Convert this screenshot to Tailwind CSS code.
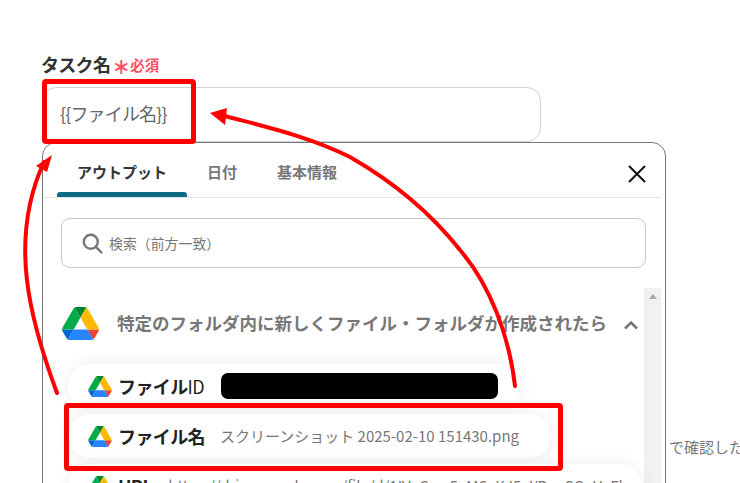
<!DOCTYPE html>
<html><head><meta charset="utf-8">
<script src="https://cdn.jsdelivr.net/npm/@tailwindcss/browser@4"></script>
</head>
<body class="bg-white">
<svg width="0" height="0" class="absolute"><defs>
<symbol id="gd" viewBox="0 0 87.3 78">
<path d="m6.6 66.85 3.85 6.65c.8 1.4 1.95 2.5 3.3 3.3l13.75-23.8h-27.5c0 1.55.4 3.1 1.2 4.5z" fill="#0066da"/>
<path d="m43.65 25-13.75-23.8c-1.35.8-2.5 1.9-3.3 3.3l-25.4 44a9.06 9.06 0 0 0 -1.2 4.5h27.5z" fill="#00ac47"/>
<path d="m73.55 76.8c1.35-.8 2.5-1.9 3.3-3.3l1.6-2.75 7.65-13.25c.8-1.4 1.2-2.95 1.2-4.5h-27.502l5.852 11.5z" fill="#ea4335"/>
<path d="m43.65 25 13.75-23.8c-1.35-.8-2.9-1.2-4.5-1.2h-18.5c-1.6 0-3.15.45-4.5 1.2z" fill="#00832d"/>
<path d="m59.8 53h-32.3l-13.75 23.8c1.35.8 2.9 1.2 4.5 1.2h50.8c1.6 0 3.15-.45 4.5-1.2z" fill="#2684fc"/>
<path d="m73.4 26.5-12.7-22c-.8-1.4-1.95-2.5-3.3-3.3l-13.75 23.8 16.15 28h27.45c0-1.55-.4-3.1-1.2-4.5z" fill="#ffba00"/>
</symbol></defs></svg>
<div class="relative w-[740px] h-[483px] overflow-hidden pl-[42px] pt-[52px] font-['Noto_Sans_CJK_JP','Liberation_Sans',sans-serif]">
  <div class="flex items-center h-[25px]">
    <span class="text-[18px] font-bold text-[#333] tracking-[-0.7px] -ml-[1px]">タスク名</span>
    <span class="text-[18px] font-black text-[#ff4d64] ml-[2px] mt-[3px] leading-none">＊</span>
    <span class="text-[14.500px] font-bold text-[#ff4d64]">必須</span>
  </div>
  <div class="mt-[10px] w-[499px] h-[55px] rounded-[14px] border border-[#d0d2d8] flex items-center pl-[17px] pb-[2px] text-[18px] text-[#666] tracking-[-0.85px]">{{ファイル名}}</div>
  <div class="w-[624px] h-[400px] rounded-tl-[14px] rounded-tr-[14px] border border-[#777] bg-white flex flex-col">
    <div class="relative h-[55px] border-b border-[#e4e4e4] flex items-start mr-[4px] shrink-0">
      <div class="relative w-[130px] ml-[14px] h-[54px] flex justify-center pt-[16px] text-[15px] font-bold text-[#333] leading-[26px]">アウトプット<span class="absolute left-0 right-0 bottom-0 h-[5px] rounded-t-[3px] bg-[#0e6b85]"></span></div>
      <div class="pt-[16px] ml-[20px] text-[15px] font-bold text-[#777] leading-[26px]">日付</div>
      <div class="pt-[16px] ml-[40px] text-[15px] font-bold text-[#777] leading-[26px]">基本情報</div>
      <svg class="absolute right-[15px] top-[22px]" width="18" height="18" viewBox="0 0 18 18"><path d="M1 1 17 17M17 1 1 17" stroke="#111" stroke-width="2" fill="none"/></svg>
    </div>
    <div class="ml-[18px] mt-[20px] w-[585px] h-[50px] rounded-[9px] border border-[#c8c8c8] flex items-center pl-[20px] shrink-0">
      <svg width="21" height="21" viewBox="0 0 21 21" fill="none" stroke="#777" stroke-width="2.4"><circle cx="8.8" cy="8.8" r="7"/><path d="m13.8 13.800 5.600 5.600" stroke-linecap="round"/></svg>
      <span class="ml-[6px] text-[13.800px] text-[#777] tracking-[0.1px]">検索（前方一致）</span>
    </div>
    <div class="flex mt-[20px] flex-1">
      <div class="w-[601px] relative">
        <div class="flex items-center pl-[19px] h-[36px] mt-[17px]">
          <svg width="37" height="33"><use href="#gd"/></svg>
          <span class="ml-[18px] text-[17.500px] font-bold text-[#777] whitespace-nowrap">特定のフォルダ内に新しくファイル・フォルダが作成されたら</span>
          <svg class="ml-[17px] mt-[4px] shrink-0" width="14" height="10" viewBox="0 0 14 10" fill="none" stroke="#777" stroke-width="2.6"><path d="m1 8.500 6-6 6 6"/></svg>
        </div>
        <div class="flex flex-col gap-[6px] mt-[23px] pl-[25px]">
          <div class="flex items-center w-[452px] h-[44px] rounded-full bg-white shadow-[0_0_16px_rgba(0,0,0,0.08)] pl-[20px]">
            <svg width="24" height="21"><use href="#gd"/></svg>
            <span class="ml-[6px] text-[18px] font-bold text-[#222] tracking-[-0.6px]">ファイル<span class="font-normal">ID</span></span>
            <span class="ml-[17px] w-[277px] h-[26px] rounded-[7px] bg-black"></span>
          </div>
          <div class="flex items-center w-[483px] h-[44px] rounded-full bg-white shadow-[0_0_16px_rgba(0,0,0,0.08)] pl-[20px]">
            <svg width="24" height="21"><use href="#gd"/></svg>
            <span class="ml-[6px] text-[18px] font-bold text-[#222] tracking-[-0.6px]">ファイル名</span>
            <span class="ml-[15px] text-[15px] text-[#777] whitespace-nowrap">スクリーンショット 2025-02-10 151430.png</span>
          </div>
          <div class="flex items-center w-[574px] h-[44px] rounded-[22px] bg-white shadow-[0_0_16px_rgba(0,0,0,0.08)] pl-[20px]">
            <svg width="24" height="21"><use href="#gd"/></svg>
            <span class="ml-[6px] text-[18px] font-bold text-[#222] tracking-[-0.6px]">URL</span>
            <span class="ml-[16px] text-[15px] text-[#777] whitespace-nowrap overflow-hidden">https://drive.google.com/file/d/1IV_Cuz-5_M6_KJ5_YD__SQ_V_Fl</span>
          </div>
        </div>
      </div>
      <div class="w-[17px] bg-[#f1f1f1] flex justify-center pt-[6px] h-[200px]">
        <span class="w-0 h-0 border-x-[4px] border-x-transparent border-b-[5px] border-b-[#a8a8a8]"></span>
      </div>
    </div>
  </div>
  <span class="absolute left-[669px] top-[436px] text-[15px] text-[#777] whitespace-nowrap">で確認した</span>
  <svg class="absolute inset-0 pointer-events-none" width="740" height="483" viewBox="0 0 740 483" fill="none">
    <rect x="44.500" y="81.500" width="149" height="60" rx="1.500" stroke="#f00" stroke-width="5"/>
    <rect x="66.500" y="405.500" width="494" height="63" rx="1.500" stroke="#f00" stroke-width="5"/>
    <path d="M515 386C509 335 490 285 460 250C430 212 390 180 350 157C310 137 270 128 225 116" stroke="#f00" stroke-width="4" stroke-linecap="round"/>
    <path d="m210 113 17-5-2 17z" fill="#f00"/>
    <path d="M57 393C30 320 8 240 44 162" stroke="#f00" stroke-width="4" stroke-linecap="round"/>
    <path d="m52 155-16 11 11 6z" fill="#f00"/>
  </svg>
</div>
</body></html>
